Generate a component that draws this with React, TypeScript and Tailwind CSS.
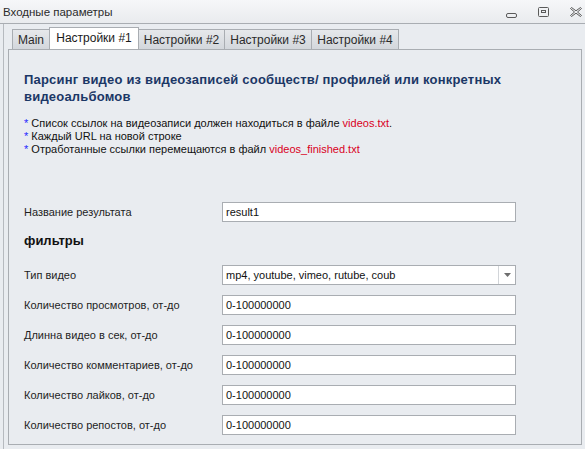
import React from "react";

const Row = ({ label, value, combo = false, className = "" }: { label: string; value: string; combo?: boolean; className?: string }) => (
  <div className={`flex items-center h-[20px] ${className}`}>
    <div className="w-[198px] text-[11px] leading-[13px] text-[#1e1e1e] whitespace-nowrap">{label}</div>
    <div className="w-[294px] h-[20px] border border-[#a9adb2] bg-white flex items-center">
      <div className="flex-1 pl-[3px] text-[11px] leading-[13px] text-[#111] whitespace-nowrap">{value}</div>
      {combo && (
        <div className="w-[17px] h-full border-l border-[#d2d5d9] flex items-center justify-center">
          <svg width="7" height="4" viewBox="0 0 7 4">
            <path d="M0 0 H7 L3.5 4 Z" fill="#6e6e6e" />
          </svg>
        </div>
      )}
    </div>
  </div>
);

export default function App() {
  const tabs = [
    { t: "Main", w: "w-[38px]", active: false },
    { t: "Настройки #1", w: "w-[90px]", active: true },
    { t: "Настройки #2", w: "w-[87px]", active: false },
    { t: "Настройки #3", w: "w-[88px]", active: false },
    { t: "Настройки #4", w: "w-[88px]", active: false },
  ];
  return (
    <div className="w-[585px] h-[449px] bg-[#e9ecf0] flex flex-col overflow-hidden font-['Liberation_Sans','Noto_Sans',sans-serif]">
      {/* title bar */}
      <div className="h-[24px] shrink-0 border-b border-[#a9adb2] bg-gradient-to-b from-[#f6f7f9] to-[#e9ebee] flex items-center pl-[3px] pr-[3px]">
        <span className="text-[11.5px] leading-[14px] text-[#2b2b2b] mt-[1px]">Входные параметры</span>
        <div className="ml-auto flex items-center gap-[20px]">
          <svg width="12" height="10" viewBox="0 0 12 10" className="mt-[3px]">
            <rect x="0.5" y="5.5" width="10" height="4" rx="1.5" fill="none" stroke="#5a5a5a" />
          </svg>
          <svg width="12" height="10" viewBox="0 0 12 10">
            <rect x="0.5" y="0.5" width="10" height="9" rx="1" fill="none" stroke="#5a5a5a" />
            <rect x="3.5" y="3.5" width="4" height="2" fill="none" stroke="#5a5a5a" />
          </svg>
          <svg width="12" height="10" viewBox="0 0 12 10">
            <path
              d="M0.5 1.5 L1.5 0.5 L6 3.8 L10.5 0.5 L11.5 1.5 L7.5 5 L11.5 8.5 L10.5 9.5 L6 6.2 L1.5 9.5 L0.5 8.5 L4.5 5 Z"
              fill="none"
              stroke="#5a5a5a"
              strokeWidth="1"
              strokeLinejoin="round"
            />
          </svg>
        </div>
      </div>

      {/* body */}
      <div className="flex-1 ml-[3px] border-l border-[#b6babf] pl-[4px] flex flex-col">
        {/* tabs */}
        <div className="h-[25px] flex items-end pl-[4px]">
          {tabs.map((tb, i) => (
            <div
              key={tb.t}
              className={`${tb.w} ${i > 0 ? "-ml-px" : ""} border-t border-l border-r border-[#a9adb2] flex items-center justify-center text-[12px] leading-[14px] whitespace-nowrap ${
                tb.active
                  ? "h-[22px] bg-white text-[#1a1a1a] relative z-10"
                  : "h-[20px] bg-gradient-to-b from-[#e6e8eb] to-[#d3d7dc] text-[#2a2a2a]"
              }`}
            >
              <span className={tb.active ? "mt-[-1px]" : "mt-[1px]"}>{tb.t}</span>
            </div>
          ))}
        </div>

        {/* panel */}
        <div className="w-[574px] h-[396px] border border-[#a9adb2] pl-[15px] pt-[21px] flex flex-col">
          <div className="text-[13px] leading-[17px] font-bold tracking-[0.2px] text-[#1b3766] whitespace-nowrap">
            Парсинг видео из видеозаписей сообществ/ профилей или конкретных
            <br />
            видеоальбомов
          </div>
          <div className="mt-[12px] text-[11px] leading-[13px] text-[#111]">
            <div>
              <span className="text-[#1f1fff]">*</span> Список ссылок на видеозаписи должен находиться в файле{" "}
              <span className="text-[#d9001c]">videos.txt</span>.
            </div>
            <div>
              <span className="text-[#1f1fff]">*</span> Каждый URL на новой строке
            </div>
            <div>
              <span className="text-[#1f1fff]">*</span> Отработанные ссылки перемещаются в файл{" "}
              <span className="text-[#d9001c]">videos_finished.txt</span>
            </div>
          </div>

          <Row label="Название результата" value="result1" className="mt-[46px]" />

          <div className="mt-[10px] h-[17px] text-[13px] leading-[17px] font-bold text-[#111]">фильтры</div>

          <Row label="Тип видео" value="mp4, youtube, vimeo, rutube, coub" combo className="mt-[16px]" />
          <Row label="Количество просмотров, от-до" value="0-100000000" className="mt-[10px]" />
          <Row label="Длинна видео в сек, от-до" value="0-100000000" className="mt-[10px]" />
          <Row label="Количество комментариев, от-до" value="0-100000000" className="mt-[10px]" />
          <Row label="Количество лайков, от-до" value="0-100000000" className="mt-[10px]" />
          <Row label="Количество репостов, от-до" value="0-100000000" className="mt-[10px]" />
        </div>
      </div>
    </div>
  );
}
